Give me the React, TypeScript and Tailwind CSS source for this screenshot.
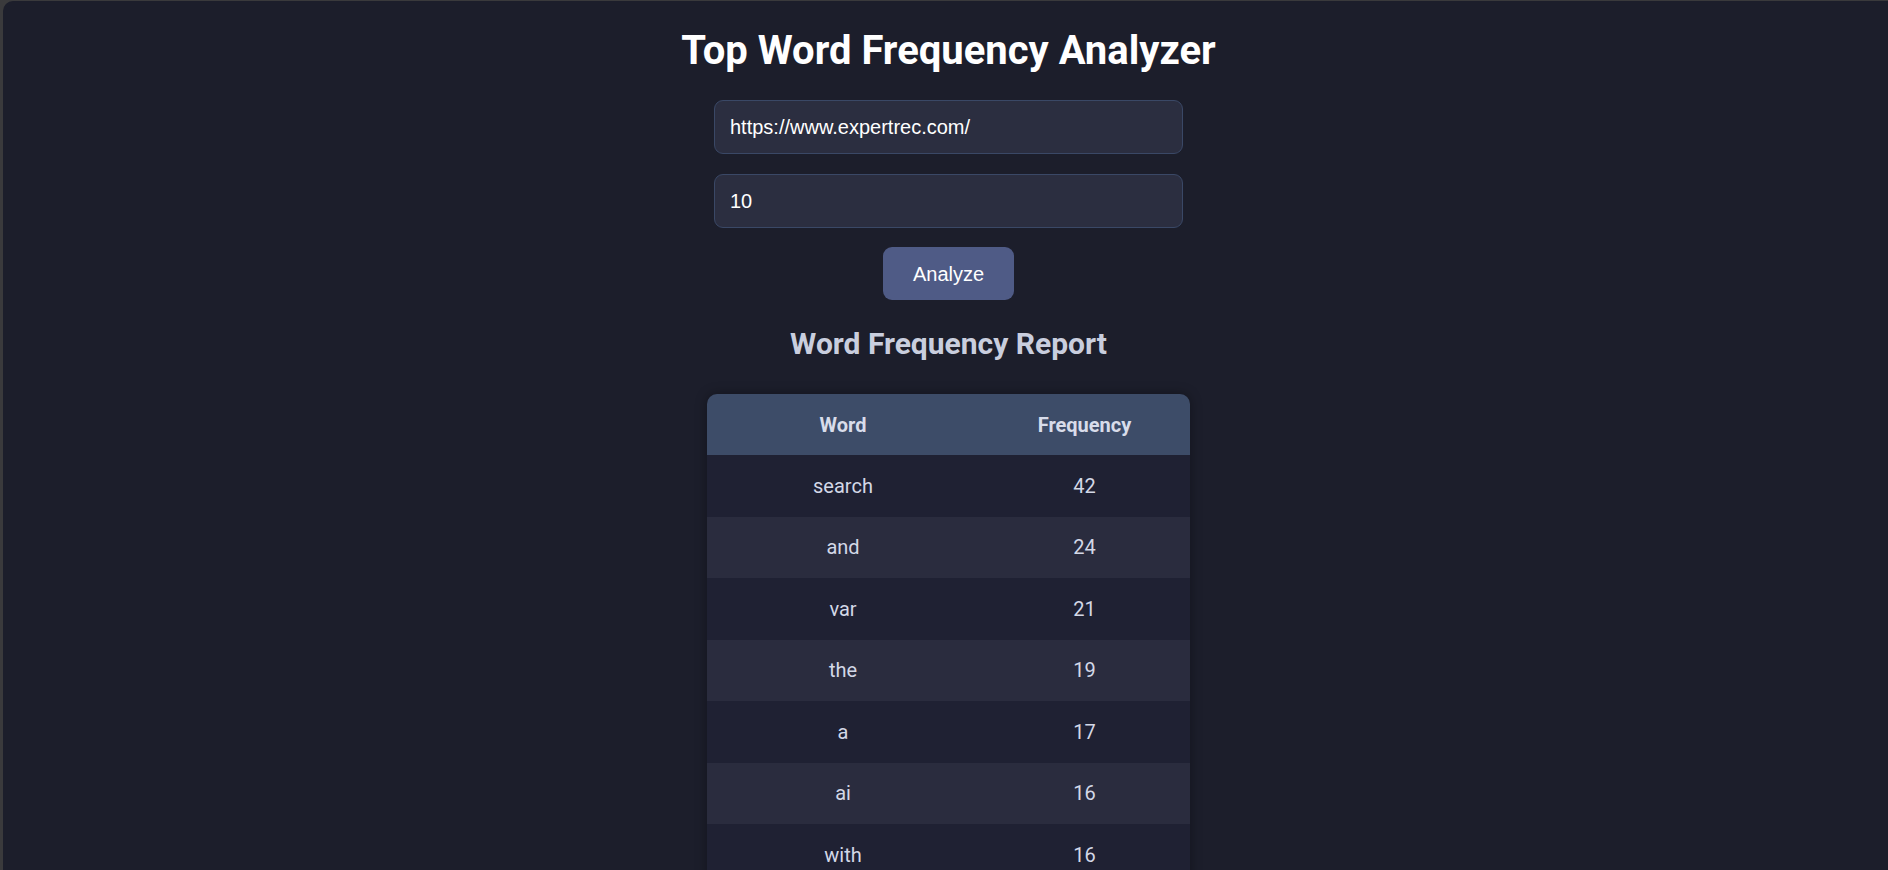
import { useState } from "react";

const rows = [
  { word: "search", count: 42 },
  { word: "and", count: 24 },
  { word: "var", count: 21 },
  { word: "the", count: 19 },
  { word: "a", count: 17 },
  { word: "ai", count: 16 },
  { word: "with", count: 16 },
  { word: "to", count: 15 },
  { word: "for", count: 14 },
  { word: "your", count: 12 },
];

export default function App() {
  const [url, setUrl] = useState("https://www.expertrec.com/");
  const [topN, setTopN] = useState("10");

  return (
    <div className="h-screen w-full overflow-hidden bg-[#3a3a3c] pl-[3px] pt-[1px]">
      <div className="h-full rounded-tl-[10px] bg-[#1c1e2b] pl-[6px] flex flex-col items-center font-['Roboto',sans-serif]">
        {/* Title */}
        <h1 className="mt-[26px] shrink-0 text-[40px] leading-[48px] font-bold text-white">
          Top Word Frequency Analyzer
        </h1>

        {/* Form */}
        <div className="mt-[25px] shrink-0 flex flex-col items-center gap-[20px]">
          <FieldInput value={url} onChange={setUrl} />
          <FieldInput value={topN} onChange={setTopN} />
        </div>
        <button className="mt-[19px] shrink-0 h-[53px] w-[131px] rounded-[9px] bg-[#4f5b86] text-[20px] text-white font-['Liberation_Sans',Arial,sans-serif]">
          Analyze
        </button>

        {/* Report */}
        <h2 className="mt-[26px] shrink-0 text-[30px] leading-[36px] font-bold text-[#c9cede]">
          Word Frequency Report
        </h2>

        <div className="mt-[32px] w-[483px] shrink-0 rounded-t-[10px] overflow-hidden shadow-[0_0_12px_rgba(0,0,0,0.35)]">
          <div className="flex h-[61px] items-center bg-[#3d4c68] text-[20px] font-bold text-[#d8dcea]">
            <div className="w-[272px] text-center">Word</div>
            <div className="flex-1 text-center">Frequency</div>
          </div>
          {rows.map((r, i) => (
            <div
              key={r.word}
              className={`flex h-[61.5px] items-center text-[20px] text-[#d3d8e7] ${
                i % 2 === 0 ? "bg-[#1f2133]" : "bg-[#2a2c3e]"
              }`}
            >
              <div className="w-[272px] text-center">{r.word}</div>
              <div className="flex-1 text-center">{r.count}</div>
            </div>
          ))}
        </div>
      </div>
    </div>
  );
}

function FieldInput({
  value,
  onChange,
}: {
  value: string;
  onChange: (v: string) => void;
}) {
  return (
    <input
      value={value}
      onChange={(e) => onChange(e.target.value)}
      className="h-[54px] w-[469px] shrink-0 rounded-[9px] border border-[#3a4866] bg-[#2b2e40] px-[15px] text-[20px] text-white outline-none font-['Liberation_Sans',Arial,sans-serif]"
    />
  );
}
